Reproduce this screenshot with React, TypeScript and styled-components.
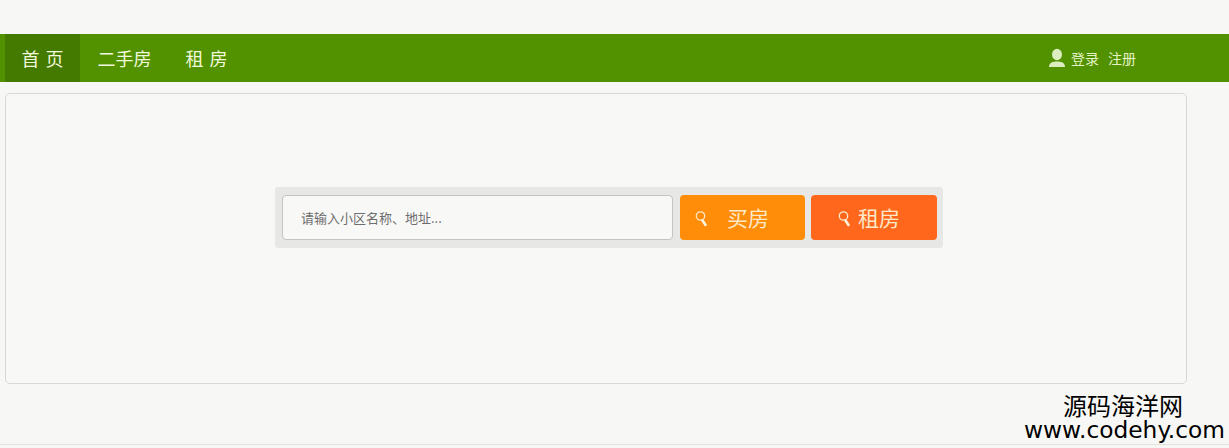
import React from "react";
import styled, { createGlobalStyle } from "styled-components";

const Global = createGlobalStyle`
  html, body { margin: 0; padding: 0; background: #f7f7f5; overflow: hidden; }
  body { font-family: "Liberation Sans", "Noto Sans CJK SC", sans-serif; }
`;

const Page = styled.div`
  position: relative;
  width: 1229px;
  height: 448px;
  padding-top: 34px;
  box-sizing: border-box;
  background: #f7f7f5;
`;

const NavBar = styled.header`
  display: flex;
  align-items: stretch;
  justify-content: space-between;
  height: 48px;
  padding: 0 93px 0 5px;
  background: #529200;
`;

const NavList = styled.nav`
  display: flex;
  align-items: stretch;
`;

const NavItem = styled.a<{ $active?: boolean; $width: number }>`
  display: flex;
  align-items: center;
  justify-content: center;
  width: ${(p) => p.$width}px;
  background: ${(p) => (p.$active ? "#457a00" : "transparent")};
  color: #f1f8dc;
  font-family: "Noto Sans CJK SC", sans-serif;
  font-size: 18px;
  word-spacing: 2px;
  white-space: pre;
`;

const UserArea = styled.div`
  display: flex;
  align-items: center;
  color: #e4f2c6;
  font-family: "Noto Sans CJK SC", sans-serif;
  font-size: 14px;
`;

const UserIcon = styled.svg`
  width: 18px;
  height: 20px;
  margin-right: 5px;
  margin-top: -1px;
`;

const UserLink = styled.a`
  margin-right: 9px;
  &:last-child { margin-right: 0; }
`;

const Panel = styled.main`
  display: flex;
  align-items: center;
  justify-content: center;
  width: 1182px;
  height: 291px;
  margin: 11px 0 0 5px;
  box-sizing: border-box;
  padding: 0 1px 43px 27px;
  border: 1px solid #d8d8d6;
  border-radius: 5px;
  background: #f8f8f6;
`;

const SearchBar = styled.div`
  display: flex;
  gap: 6px;
  width: 668px;
  height: 61px;
  box-sizing: border-box;
  padding: 8px 6px 8px 7px;
  border-radius: 3px;
  background: #e7e7e5;
`;

const SearchInput = styled.div`
  display: flex;
  flex: none;
  align-items: center;
  width: 391px;
  height: 45px;
  margin-right: 1px;
  box-sizing: border-box;
  padding-left: 18px;
  border: 1px solid #c4c4c2;
  border-radius: 4px;
  background: #f8f8f6;
  color: #6e6e6e;
  font-family: "Noto Sans CJK SC", sans-serif;
  font-size: 13px;
`;

const SearchButton = styled.button<{ $bg: string; $width: number; $iconLeft: number; $gap: number }>`
  display: flex;
  flex: none;
  align-items: center;
  width: ${(p) => p.$width}px;
  height: 45px;
  padding: 0 0 0 ${(p) => p.$iconLeft}px;
  gap: ${(p) => p.$gap}px;
  border: none;
  border-radius: 4px;
  background: ${(p) => p.$bg};
  color: #fde9c8;
  font-family: "Noto Sans CJK SC", sans-serif;
  font-size: 21px;
`;

const SearchIcon = styled.svg`
  width: 13px;
  height: 18px;
  flex: none;
  margin-top: 3px;
`;

const FooterLine = styled.div`
  position: absolute;
  left: 0;
  right: 0;
  top: 444px;
  height: 1px;
  background: #e2e2e0;
`;

const Watermark = styled.div`
  position: absolute;
  right: 4px;
  top: 391px;
  width: 201px;
  color: #000;
  text-align: center;
`;

const WatermarkName = styled.div`
  padding-right: 3px;
  font-family: "Noto Sans CJK SC", sans-serif;
  font-size: 24px;
  line-height: 28px;
`;

const WatermarkUrl = styled.div`
  font-family: "DejaVu Sans", sans-serif;
  font-size: 23.3px;
  line-height: 22px;
  white-space: nowrap;
`;

const Magnifier = () => (
  <SearchIcon viewBox="0 0 13 18" fill="none">
    <circle cx="5.5" cy="6" r="4.2" stroke="#fde9c8" strokeWidth="1.3" />
    <path d="M7.5 10.5 L10.5 15" stroke="#fff3dc" strokeWidth="2.6" strokeLinecap="round" />
  </SearchIcon>
);

export default function App() {
  return (
    <Page>
      <Global />
      <NavBar>
        <NavList>
          <NavItem $active $width={75}>首 页</NavItem>
          <NavItem $width={89}>二手房</NavItem>
          <NavItem $width={75}>租 房</NavItem>
        </NavList>
        <UserArea>
          <UserIcon viewBox="0 0 18 20">
            <ellipse cx="9" cy="6.5" rx="5" ry="5.8" fill="#dcedc0" />
            <path d="M1 19 C1 14.5 5 13.5 9 13.5 C13 13.5 17 14.5 17 19 Z" fill="#dcedc0" />
          </UserIcon>
          <UserLink>登录</UserLink>
          <UserLink>注册</UserLink>
        </UserArea>
      </NavBar>
      <Panel>
        <SearchBar>
          <SearchInput>请输入小区名称、地址...</SearchInput>
          <SearchButton $bg="#ff8d0a" $width={125} $iconLeft={15} $gap={19}>
            <Magnifier />
            买房
          </SearchButton>
          <SearchButton $bg="#ff671d" $width={126} $iconLeft={27} $gap={7}>
            <Magnifier />
            租房
          </SearchButton>
        </SearchBar>
      </Panel>
      <FooterLine />
      <Watermark>
        <WatermarkName>源码海洋网</WatermarkName>
        <WatermarkUrl>www.codehy.com</WatermarkUrl>
      </Watermark>
    </Page>
  );
}
